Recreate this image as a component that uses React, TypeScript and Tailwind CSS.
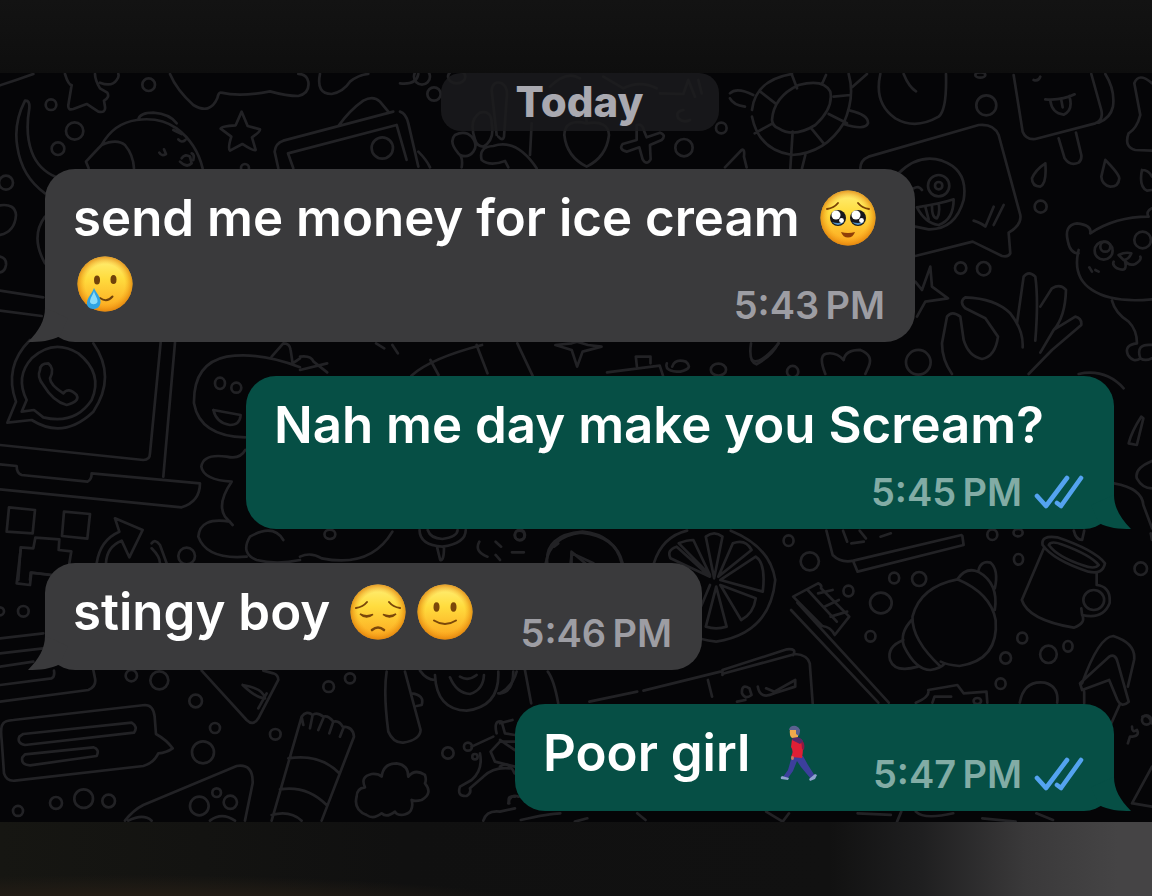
import React from "react";

type Side = "in" | "out";

function Dots({ at }: { at: number[][] }) {
  return (
    <>
      {at.map(([x, y, rx, ry]) => (
        <ellipse key={`${x}-${y}`} cx={x} cy={y} rx={rx} ry={ry ?? rx} />
      ))}
    </>
  );
}

function Doodles() {
  return (
    <svg
      aria-hidden="true"
      className="absolute inset-0 h-full w-full [&_*]:[vector-effect:non-scaling-stroke]"
      viewBox="0 73 1152 749"
      preserveAspectRatio="xMidYMid slice"
      fill="none"
      stroke="#222225"
      strokeWidth="2.7"
      strokeLinecap="round"
      strokeLinejoin="round"
    >
      {/* top left: horn, star, planet, picture frame */}
      <g transform="translate(0 60) scale(.3333)">
        <path d="M0 76Q50 60 100 42M75 122Q40 190 52 260Q65 350 135 400M75 122Q90 120 88 145Q75 220 95 275Q115 330 170 352" />
        <path d="M195 42Q205 75 215 75L205 135Q203 152 220 147L260 132L295 155Q318 160 315 140L312 122Q330 112 322 98L300 85Q285 60 285 42M300 68Q335 82 350 60Q358 50 355 42" />
        <path d="M510 42Q530 90 580 135Q630 165 652 115Q656 95 664 98Q720 112 810 94Q860 108 895 108Q930 100 925 65Q920 42 895 42M960 42Q948 102 995 102Q1030 95 1050 65Q1075 45 1105 42" />
        <path d="M725 155L743 198L780 208Q782 215 756 232L767 270Q760 274 727 252L690 272Q683 265 694 230L662 206Q664 198 707 196Z" />
        <path d="M258 305Q290 270 305 255Q340 190 410 180Q480 170 530 205Q590 250 608 325M258 305L266 325M305 255Q350 235 375 255Q400 285 402 325M415 178Q420 158 460 158Q510 162 530 190M520 210L545 222M535 238Q545 250 556 240M478 278Q485 290 498 282L492 268M545 295Q555 280 570 290L575 310Q560 325 540 305M575 280Q585 285 580 300" />
        <path d="M1015 198Q1050 150 1090 122Q1120 105 1140 125L1165 155M835 325L824 275Q826 250 850 242L1180 155M880 325L864 280L1190 195L1220 300" />
        <path d="M0 436Q45 430 48 465Q45 515 0 525M0 590Q20 595 18 615Q15 635 0 637M135 470Q90 530 135 610M0 692L130 712M0 752L125 768" />
        <Dots at={[[446, 74, 19], [153, 134, 16], [224, 213, 26], [174, 266, 19], [18, 368, 21], [735, 324, 12], [1147, 264, 32], [1266, 50, 24]]} />
      </g>

      {/* top middle: peace hand, balloon, plus */}
      <g transform="translate(400 60) scale(.3333)">
        <path d="M0 155Q18 160 25 190L55 320M55 275Q80 300 90 322M0 70Q50 75 55 42M185 322Q190 290 175 280Q145 245 165 225Q195 210 215 230Q235 255 220 275Q205 295 180 285M225 238Q205 180 240 158Q275 150 275 190Q285 240 250 260Q230 258 225 238M290 225L275 90Q280 60 305 70Q325 80 320 115L312 230Q308 245 295 230M245 300Q235 260 280 258Q350 235 410 325M390 285L395 190M245 300Q270 320 315 303L325 322" />
        <path d="M560 190Q495 175 493 225Q500 290 560 320Q620 290 627 225Q625 180 560 190M560 185Q555 160 565 150M710 195Q728 190 732 212L740 232L780 218Q800 225 785 240L750 255L752 298Q740 318 728 298L718 262L680 275Q655 268 668 252L710 240ZM450 80Q500 30 540 55M610 50L670 85Q720 60 770 85M780 100L850 102L865 60L885 110M895 60L905 100M850 150Q825 155 835 175Q850 190 870 180M990 100Q1010 80 1060 105M990 115Q1000 135 1035 140M975 322L1025 270Q1035 265 1032 290L1040 322" />
        <Dots at={[[102, 102, 20], [852, 263, 26], [964, 204, 16], [170, 50, 26, 20]]} />
      </g>

      {/* top right: turtle, ice lolly, speech card, bear, hand */}
      <g transform="translate(752 60) scale(.3333)">
        <path d="M60 180Q65 110 140 75Q215 55 235 95Q245 145 190 195Q125 235 80 205Q62 200 60 180M0 150Q10 60 120 42M0 170Q20 270 120 285Q220 280 275 190Q310 110 290 42M120 45L135 85M210 72L222 45M245 110L295 105M230 162L285 190M178 205L215 250M122 215L115 325M62 190L8 220M70 130L25 95M160 285L150 325M295 152Q350 165 348 190Q340 212 275 192M300 82L345 42M385 42Q365 130 430 175Q490 210 560 170Q585 150 582 42M455 42Q470 80 492 94" />
        <path d="M785 45L812 215Q822 240 850 237L1030 190Q1055 180 1048 150L1018 42M1060 42Q1090 90 1083 140Q1075 175 1040 188M845 60Q860 65 865 50M880 118Q930 122 968 103M895 122Q900 160 935 164Q965 150 952 108M928 120L932 142M920 235L938 295Q955 320 980 308Q990 300 988 285L972 218M1200 70Q1160 35 1147 70L1165 165Q1155 205 1130 220Q1115 260 1150 270L1200 272" />
        <path d="M325 325Q325 300 350 290L680 195Q725 190 740 225L805 465Q810 495 770 518L775 580Q770 592 750 588L662 545L490 588M440 340Q500 280 570 302Q650 330 635 420Q610 510 530 508L490 500M495 442Q570 430 605 418Q605 480 560 495Q520 490 495 442M520 440L530 478M540 438Q540 475 555 475Q565 460 560 430M485 385Q500 375 510 390M665 482Q690 490 700 500L725 440M725 495L755 435" />
        <path d="M880 310Q885 370 865 380Q840 380 840 355Q850 330 880 310M1060 300Q1100 340 1102 355Q1100 380 1075 380Q1050 375 1048 350Q1055 320 1060 300M1170 330Q1160 380 1185 392L1200 390M1200 350Q1190 330 1170 330" />
        <path d="M1015 520Q1020 495 975 490Q935 495 948 545Q955 580 980 580M1015 520Q1090 470 1190 470Q1180 455 1200 445M980 570Q960 650 1020 690Q1080 730 1200 718M1100 585Q1120 575 1138 580Q1130 600 1115 600ZM1118 600Q1130 640 1095 625Q1080 615 1085 605M1118 600Q1130 620 1150 612Q1170 600 1165 590M1012 622L1020 635M1030 630L1040 635M1080 722Q1090 760 1130 785Q1155 810 1155 850Q1115 855 1128 885Q1145 910 1165 895Q1150 850 1200 855M1165 895Q1180 905 1200 895" />
        <path d="M600 942Q570 900 570 850L585 770Q600 750 625 770L635 840Q650 890 690 897Q730 890 738 830L700 775L640 745Q620 725 640 712Q730 715 775 760Q815 810 812 862M795 790L815 650Q830 630 850 650Q860 720 850 842M865 740L900 685Q925 670 942 690Q940 770 905 810L865 878M905 810L970 770Q990 775 988 795L900 870L830 942M490 665L510 690L535 620L540 680L588 715L520 725L495 770" />
        <path d="M220 942Q195 880 230 880Q255 878 275 900Q280 870 325 870Q365 885 350 920L340 942M0 900Q20 920 80 850M980 942Q1060 925 1115 985" />
        <Dots at={[[703, 136, 30], [560, 377, 32], [560, 377, 11], [866, 440, 18], [626, 624, 17], [695, 626, 20], [499, 907, 37], [122, 935, 17], [1055, 572, 27], [1060, 560, 15], [1172, 540, 25], [685, 45, 15, 8]]} />
      </g>

      {/* left: phone badge, laptop, dinosaur, pixel tree */}
      <g transform="translate(0 330) scale(.3333)">
        <path d="M80 210Q45 140 95 85Q160 25 235 70Q310 130 275 210Q225 285 130 262L102 240L65 245ZM48 215L22 278L95 270Q190 330 280 245Q350 140 280 40M48 215Q10 110 90 30M120 120Q120 100 145 100Q165 115 150 145Q150 165 190 190Q205 170 230 195Q240 215 200 225Q160 215 130 165Q110 140 120 120" />
        <path d="M0 345L430 390Q450 390 450 370L482 38M525 38L490 440M0 403L50 408Q50 430 65 435L262 455Q275 450 275 430L600 460Q600 515 545 532L0 478M27 532L105 540L98 610L20 605ZM192 545L270 552L262 626L186 618ZM55 750L62 652L100 655L106 623L178 628L176 660L214 664L208 700M90 750L92 728L160 735M345 565L428 600L388 682L365 632Q320 650 318 700M345 565L358 605Q300 630 290 700M455 640Q465 625 480 645L500 700M455 655Q480 680 480 700" />
        <path d="M736 322Q600 320 582 220Q580 100 680 80Q780 65 900 112M815 80L850 40Q870 40 872 60L878 100L900 85M640 240L722 255Q720 285 690 285Q650 280 640 240M736 360Q720 390 680 380Q610 370 604 410Q610 450 695 455Q650 520 675 560L698 585M690 575Q600 560 595 620Q620 690 740 680M850 630Q820 580 750 620Q720 670 770 690Q830 705 900 690" />
        <Dots at={[[660, 160, 15, 17], [709, 173, 15], [560, 678, 25]]} />
      </g>

      {/* bottom left: documents, note card, sock, cheese, cloud */}
      <g transform="translate(0 550) scale(.3333)">
        <path d="M50 100L62 0M50 100L90 105L94 68L150 75M0 265L130 250M0 310L130 295M0 350L100 335M0 455L265 420Q290 410 285 385L280 360M0 405L155 385Q165 380 162 362M10 520Q0 530 5 570L12 670Q20 695 45 692L430 648Q460 640 475 610Q500 608 518 595Q500 570 468 552L464 500Q460 465 435 465L40 510Q15 512 10 520M70 552L395 518Q415 530 402 548L75 585Q50 580 58 560ZM75 613L280 592Q300 598 290 618L90 646Q62 645 67 622Z" />
        <path d="M605 362L740 510Q760 530 775 505L835 390Q835 375 820 370L790 362M728 405Q790 415 795 445Q770 445 728 405M800 430L775 475M375 812Q400 780 430 765L710 648Q760 640 758 700L735 812M385 812Q430 790 455 812M630 812Q665 785 705 812M815 812L905 500Q920 480 938 495Q950 485 970 500Q985 495 1000 515Q1018 510 1028 530Q1060 530 1062 560L965 812M905 500L910 525M938 495L930 535M970 505L955 540M1000 515L988 550M1030 535L1020 560M865 625Q960 610 1018 670M840 718Q920 705 980 765M815 795Q870 780 905 812" />
        <path d="M1100 795Q1060 780 1070 740Q1070 715 1095 712Q1080 680 1115 672Q1135 670 1145 680Q1150 640 1190 640Q1225 645 1225 680Q1245 655 1275 675Q1280 690 1275 700Q1300 730 1265 750Q1245 755 1235 750Q1245 790 1205 795Q1190 795 1185 785Q1160 805 1145 790Q1120 810 1100 795M1160 365Q1150 430 1165 545Q1180 580 1210 578Q1260 570 1262 540L1215 365M1235 430Q1275 435 1265 465L1250 468M1260 362Q1280 390 1305 390M1305 375Q1310 480 1400 482Q1500 470 1495 365M1350 382Q1370 430 1410 432Q1450 420 1452 375M1380 380Q1405 395 1430 375M1495 430Q1540 430 1540 365M1480 560L1415 590M1440 610Q1450 660 1415 690L1380 710Q1370 740 1400 738Q1415 730 1410 715L1450 680Q1480 650 1530 655M1545 575L1500 575L1472 605L1485 635L1545 650M1490 550Q1480 510 1505 515L1515 550L1545 555M1450 812Q1460 780 1500 785L1545 775M1545 740Q1520 735 1528 760" />
        <Dots at={[[70, 184, 16], [0, 184, 12], [394, 377, 17], [478, 391, 27], [587, 453, 19], [645, 534, 15], [826, 553, 16], [609, 607, 33], [54, 783, 15], [168, 759, 18], [251, 746, 28], [326, 753, 19], [598, 768, 28], [650, 728, 13], [691, 757, 20], [986, 410, 16], [1050, 385, 15], [1344, 609, 17], [1404, 590, 12], [1425, 620, 8]]} />
      </g>

      {/* strips between the bubbles */}
      <g transform="translate(300 335) scale(.5434 .3333)">
        <path d="M0 65Q20 60 25 80L50 112M0 105L50 85M205 122Q240 70 335 30M325 30L345 115M240 75L255 120M140 25L155 40M170 30L180 55M400 25L428 122M470 30L500 25L510 20L530 30L555 35L520 50L510 95L500 45ZM565 112L662 92L668 122M620 95L618 65L645 65L645 85M675 85Q670 110 700 110Q725 100 710 80Q690 70 685 95M830 25Q825 80 840 88Q870 60 880 25M1548 245Q1530 290 1525 325L1540 330L1552 250ZM1568 378Q1535 400 1540 430Q1550 460 1568 460M1498 445Q1550 460 1552 510L1568 580" />
        <path d="M0 665Q20 650 40 670Q130 700 170 590M220 585Q220 630 262 635Q305 625 305 585M235 585Q240 610 262 612Q290 605 290 585M252 635L258 675Q265 680 265 635M330 620Q320 650 345 665M360 620L370 635M390 652L412 652M360 660L368 675M455 685Q450 600 520 590Q580 600 592 685M498 685L500 655L540 685" />
        <Dots at={[[55, 598, 10, 14], [404, 601, 9, 14], [770, 104, 14, 18]]} />
      </g>

      {/* bottom right: citrus, brush, croissant, mug, pen */}
      <g transform="translate(500 520) scale(.4158 .3333)">
        <path d="M370 130Q390 50 450 32M555 32Q650 80 662 180Q650 340 520 365Q480 360 455 340M515 175L495 50Q515 30 535 50ZM525 170L560 70Q590 55 605 90ZM530 180L615 110Q640 130 632 215ZM530 195L615 235Q610 280 580 300ZM520 200L545 320Q520 330 495 320ZM505 195L480 270M505 170L410 115Q400 90 425 80ZM505 165L430 70Q450 60 465 60Z" />
        <path d="M785 32L800 105Q820 130 850 122L1110 45M850 125L860 155L1115 75L1112 48M825 32L835 65M845 70L875 65M865 32L880 55M915 50L940 40M705 230L765 190Q775 195 772 205L840 290L805 345Q795 320 775 318L705 230M740 210L810 305M765 220L800 210M780 260L815 240M795 290L835 275M700 270L910 548M715 248L935 548" />
        <path d="M1060 440Q990 360 992 290Q1010 200 1100 178Q1180 220 1192 300Q1200 420 1105 438Q1075 435 1060 425M1100 178Q1120 140 1150 155Q1200 190 1190 270M1150 155Q1155 120 1180 128Q1200 150 1190 205M990 300Q960 340 972 380Q1000 450 1035 450Q1060 445 1070 430M970 360Q930 380 938 420Q950 460 1005 440" />
        <path d="M1305 75Q1300 45 1340 52Q1430 90 1455 130Q1450 165 1415 155Q1330 120 1305 75M1320 75Q1325 60 1355 75Q1420 105 1440 135Q1430 150 1400 135Q1340 110 1320 75M1308 85L1255 240Q1270 300 1380 323Q1410 310 1400 285M1435 160L1435 195Q1470 200 1466 250Q1450 300 1400 285L1398 265M1380 32Q1385 60 1400 60L1405 32M1565 40L1568 60M1400 490Q1440 350 1475 348Q1530 370 1525 420L1510 500M1395 490L1465 410Q1480 400 1485 425L1512 545Q1495 565 1485 540L1465 480L1400 510ZM1405 515L1405 550M1490 555L1465 625" />
        <path d="M215 545L330 515M345 512L530 455M535 465L535 450L690 388Q715 385 705 405M540 460L710 402Q740 405 745 430L752 550M500 480L510 530M570 545L590 540M620 500Q625 540 660 520L710 500M640 505L660 515L710 480L710 500M600 505Q580 490 582 520Q590 540 605 525ZM1000 548Q1035 530 1030 510L1100 495L1115 520L1170 515L1172 548M1040 548L1045 530L1085 530M1250 548Q1260 480 1310 488Q1345 500 1340 548M40 455Q30 500 0 520M60 450L75 550M115 455Q130 480 140 550M110 130Q120 50 195 38Q280 50 295 130M172 130L172 95L205 130M130 80L140 70" />
        <path d="M1545 590Q1560 580 1568 610M1510 670L1515 650Q1540 650 1532 630Q1520 640 1520 620M1520 850L1568 740M1522 850L1568 860M0 610L30 600M0 660L35 690M0 740Q20 720 35 760M20 850Q25 820 45 830M50 900Q120 880 145 880M180 905L210 895M330 880L350 900M640 875L680 905L695 880M860 880L940 885M955 905L965 875M1000 875Q1020 900 1090 880M1160 895L1240 905M1290 880L1330 900" />
        <Dots at={[[694, 62, 12, 16], [745, 124, 22, 27], [948, 174, 12, 16], [1008, 177, 17, 21], [838, 213, 12, 16], [916, 249, 26, 31], [891, 349, 12, 16], [1184, 44, 12, 16], [1247, 118, 11, 16], [1246, 38, 11], [1428, 240, 25, 30], [1256, 354, 12, 16], [1216, 414, 13, 17], [1319, 403, 20, 26], [1366, 379, 11, 16], [1204, 491, 12, 16], [1541, 146, 15, 19], [48, 45, 12, 16], [1555, 600, 11, 14], [1148, 543, 9]]} />
      </g>
    </svg>
  );
}

function Face({ label, children }: { label: string; children: React.ReactNode }) {
  const id = `face-${label.replace(/\s/g, "-")}`;
  return (
    <svg role="img" aria-label={label} viewBox="0 0 56 56" className="h-14 w-14 shrink-0" fill="none" strokeLinecap="round">
      <defs>
        <linearGradient id={id} x1="0" y1="0" x2="0" y2="1">
          <stop offset="0" stopColor="#fff07a" />
          <stop offset=".4" stopColor="#ffdc3e" />
          <stop offset="1" stopColor="#fca51e" />
        </linearGradient>
        <radialGradient id={`${id}-rim`}>
          <stop offset=".72" stopColor="#f59a14" stopOpacity="0" />
          <stop offset="1" stopColor="#dc7d0a" stopOpacity=".75" />
        </radialGradient>
      </defs>
      <circle cx="28" cy="28" r="27.5" fill={`url(#${id})`} />
      <circle cx="28" cy="28" r="27.5" fill={`url(#${id}-rim)`} />
      {children}
    </svg>
  );
}

function PleadingFace() {
  return (
    <Face label="pleading face">
      <path d="M7 19Q14 18 18 13M38 13Q42 18 49 19" stroke="#7a4206" strokeWidth="1.9" />
      <ellipse cx="18" cy="28" rx="8" ry="8" fill="#17171c" />
      <ellipse cx="38" cy="28" rx="8" ry="8" fill="#17171c" />
      <path d="M12 32Q18 38 24 32Q18 34 12 32M32 32Q38 38 44 32Q38 34 32 32" fill="#4f8fc4" />
      <circle cx="16" cy="25" r="4.5" fill="#fff" />
      <circle cx="36" cy="25" r="4.5" fill="#fff" />
      <circle cx="21.500" cy="30.500" r="2.4" fill="#fff" />
      <circle cx="41.500" cy="30.500" r="2.4" fill="#fff" />
      <path d="M21 42Q28 44 35 42Q33 47.500 28 47.500Q23 47.500 21 42" fill="#8f3e08" />
    </Face>
  );
}

function TearFace() {
  return (
    <Face label="smiling face with tear">
      <ellipse cx="20" cy="24" rx="3" ry="4.600" fill="#70420a" />
      <ellipse cx="36.500" cy="23.500" rx="3" ry="4.600" fill="#70420a" />
      <path d="M23 42Q30 47 35.500 40.500" stroke="#70420a" strokeWidth="2" />
      <path d="M17 32C19 37 24 41 23.500 46.500C23 51 20 53 16.500 53C12 53 9.500 50 10 46.500C10.500 41 15 38 17 32Z" fill="#2fa3e2" />
      <path d="M17 35C18 40 21 42 20.500 46C19 49 14 49 13 46C13 42 16 39 17 35Z" fill="#8adcf8" />
    </Face>
  );
}

function PensiveFace() {
  return (
    <Face label="pensive face">
      <path d="M6 24Q13 23 17 18M39 18Q43 23 50 24" stroke="#7a470a" strokeWidth="2" />
      <path d="M10 30Q16 36 23 30.500Q16 33 10 30ZM33 30.500Q40 36 46 30Q40 33 33 30.500Z" fill="#7a470a" stroke="#7a470a" strokeWidth="1.4" />
      <path d="M22 46Q28 41 34 46" stroke="#7a470a" strokeWidth="2.600" />
    </Face>
  );
}

function SlightSmile() {
  return (
    <Face label="slightly smiling face">
      <ellipse cx="19.500" cy="23" rx="3" ry="4.800" fill="#7a470a" />
      <ellipse cx="36.500" cy="23" rx="3" ry="4.800" fill="#7a470a" />
      <path d="M17 36.500Q28 43.500 39 36.500" stroke="#7a470a" strokeWidth="2" />
    </Face>
  );
}

function Walking() {
  return (
    <svg role="img" aria-label="person walking" viewBox="0 0 56 56" className="h-14 w-14 shrink-0">
      <path d="M22 31L33 31L38 40L45 51L41 54L31 42L27 36L23 46L18 53L13 52L18 45Z" fill="#3c3f9c" />
      <path d="M12 51L19 53L18 55L11 54Q10 52 12 51ZM45 49L47 50L45 54L40 56L39 54Z" fill="#8fa3cf" />
      <path d="M22 14Q28 11 32 15Q34 22 32 33L21 32Q24 26 21 22Z" fill="#e01f35" />
      <path d="M30 14Q36 17 34 25L32 24Q32 19 30 14Z" fill="#8c1a44" />
      <path d="M23 12Q29 11 33 16L30 19L22 15Z" fill="#56296a" />
      <path d="M20 4L28 3L28 12L22 13Q19 11 20 4Z" fill="#f2a94c" />
      <path d="M19 5Q20 0 26 1Q32 3 29 11L26 9L26 5Z" fill="#5b6190" />
      <ellipse cx="22.500" cy="33" rx="1.500" ry="2" fill="#c87862" />
    </svg>
  );
}

function Ticks() {
  return (
    <svg role="img" aria-label="Read" viewBox="0 0 50 34" className="h-[34px] w-[50px] shrink-0" fill="none" stroke="#54a3f0" strokeWidth="4.6" strokeLinecap="round" strokeLinejoin="round">
      <path d="M3 21L12 31L33 3M23 28L27 31L47 3" />
    </svg>
  );
}

function Tail({ side }: { side: Side }) {
  return (
    <svg
      aria-hidden="true"
      viewBox="0 0 40 34"
      className={
        side === "in"
          ? "absolute bottom-0 -left-[17px] h-[34px] w-10 text-[#3a3a3c]"
          : "absolute -right-[17px] bottom-0 h-[34px] w-10 -scale-x-100 text-[#064f45]"
      }
    >
      <path d="M17 0C17 12 11 23 0 34C12 34 23 33 32 28L40 10Z" fill="currentColor" />
    </svg>
  );
}

function Bubble({ side, className, children }: { side: Side; className: string; children: React.ReactNode }) {
  return (
    <li
      className={`relative w-full rounded-[30px] pt-4 pr-[30px] pb-[14px] pl-7 ${
        side === "in" ? "self-start bg-[#3a3a3c] text-[#9d9da3]" : "self-end bg-[#064f45] text-[#82aca5]"
      } ${className}`}
    >
      <Tail side={side} />
      {children}
    </li>
  );
}

function Line({ children }: { children: React.ReactNode }) {
  return (
    <p className="flex h-[66px] items-center text-[51px] leading-[66px] font-semibold whitespace-nowrap text-white">
      {children}
    </p>
  );
}

function Time({ value, read }: { value: string; read?: boolean }) {
  return (
    <div className="flex flex-1 items-center justify-end gap-3 text-[38px] leading-[46px] font-semibold whitespace-nowrap">
      <time>{value}</time>
      {read && <Ticks />}
    </div>
  );
}

export default function App() {
  return (
    <div className="flex min-h-screen flex-col bg-[#0f0f0f] font-['Inter','Liberation_Sans',sans-serif]">
      <header className="h-[73px] bg-linear-to-b from-[#131313] to-[#0e0e0e]" />
      <main className="relative bg-[#050507] pr-[38px] pb-[11px] pl-[45px]">
        <Doodles />
        <div className="relative flex flex-col items-center">
          <h1 className="w-full max-w-[278px] rounded-[20px] bg-[#1b1b1d]/85 text-center text-[42px] leading-[58px] font-extrabold text-[#a9a9b0]">
            Today
          </h1>
          <ol className="mt-[38px] flex w-full flex-col gap-[34px]">
            <Bubble side="in" className="max-w-[870px]">
              <Line>
                <span className="mr-5">send me money for ice cream</span>
                <PleadingFace />
              </Line>
              <div className="flex items-end">
                <div className="mb-[11px] ml-1">
                  <Line>
                    <TearFace />
                  </Line>
                </div>
                <Time value={"5:43\u202fPM"} />
              </div>
            </Bubble>
            <Bubble side="out" className="max-w-[868px]">
              <div className="mb-[11px]">
                <Line>Nah me day make you Scream?</Line>
              </div>
              <Time value={"5:45\u202fPM"} read />
            </Bubble>
            <Bubble side="in" className="max-w-[657px]">
              <div className="flex items-end">
                <div className="mb-[11px]">
                  <Line>
                    <span className="mr-5">stingy boy</span>
                    <span className="flex gap-[11px]">
                      <PensiveFace />
                      <SlightSmile />
                    </span>
                  </Line>
                </div>
                <Time value={"5:46\u202fPM"} />
              </div>
            </Bubble>
            <Bubble side="out" className="max-w-[599px]">
              <div className="flex items-end">
                <div className="mb-[11px]">
                  <Line>
                    <span className="mr-5">Poor girl</span>
                    <Walking />
                  </Line>
                </div>
                <Time value={"5:47\u202fPM"} read />
              </div>
            </Bubble>
          </ol>
        </div>
      </main>
      <footer className="min-h-[74px] flex-1 bg-[radial-gradient(ellipse_at_11%_130%,#2c2319_0%,#221c15_18%,transparent_32%),linear-gradient(to_right,#161612_0%,#101010_35%,#111111_72%,#1f1f20_80%,#3a393a_89%,#454445_97%)]" />
    </div>
  );
}
